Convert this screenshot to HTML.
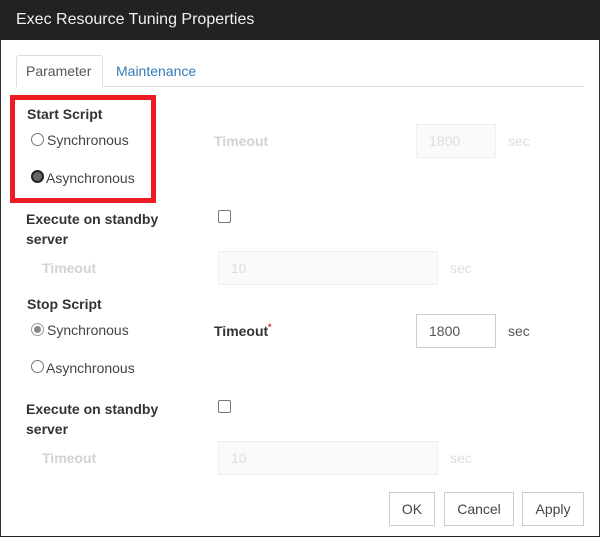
<!DOCTYPE html>
<html><head><meta charset="utf-8">
<style>
html,body{margin:0;padding:0;background:#fff}
#p{position:relative;width:600px;height:537px;overflow:hidden;background:#fff;font-family:"Liberation Sans",sans-serif;font-size:14px;color:#333}
#p div{position:absolute;white-space:nowrap;box-sizing:border-box}
.t{line-height:20px}
.b{font-weight:bold}
.d{color:#d2d2d2}
.s{color:#555}
.i{border:1px solid #ccc;height:34px;line-height:32px;padding-left:12px;color:#555}
.id{border:1px solid #eee;background:#fafafa;color:#ddd}
.btn{border:1px solid #ccc;height:34px;line-height:32px;text-align:center;color:#444;top:492px}
.r{width:13px;height:13px;border-radius:50%;border:1px solid #767676;background:#fff}
.c{width:13px;height:13px;border-radius:2px;border:1px solid #767676;background:#fff}
</style></head><body>
<div id="p">
<div style="left:0;top:0;width:600px;height:40px;background:#222"></div>
<div class="t" style="left:16px;top:9px;font-size:16px;line-height:22px;color:#f0f0f0">Exec Resource Tuning Properties</div>
<div style="left:0;top:40px;width:1px;height:497px;background:#333"></div>
<div style="left:599px;top:40px;width:1px;height:497px;background:#333"></div>
<div style="left:0;top:536px;width:600px;height:1px;background:#222"></div>

<div style="left:16px;top:86px;width:568px;height:1px;background:#ddd"></div>
<div style="left:16px;top:55px;width:87px;height:32px;border:1px solid #ddd;border-bottom:0;border-radius:3px 3px 0 0;background:#fff"></div>
<div class="t" style="left:26px;top:61px;color:#555">Parameter</div>
<div class="t" style="left:116px;top:61px;color:#337ab7">Maintenance</div>

<div style="left:10px;top:95px;width:146px;height:108px;border:5px solid #ed1c24"></div>
<div class="t b" style="left:27px;top:104px">Start Script</div>
<div class="r" style="left:31px;top:133px"></div>
<div class="t s" style="left:47px;top:130px;color:#444">Synchronous</div>
<div class="r" style="left:31px;top:170px;background:#666;border:2px solid #222"></div>
<div class="t s" style="left:46px;top:168px;color:#444">Asynchronous</div>
<div class="t b d" style="left:214px;top:131px">Timeout</div>
<div class="i id" style="left:416px;top:124px;width:80px">1800</div>
<div class="t" style="left:508px;top:131px;color:#ddd">sec</div>

<div class="t b" style="left:26px;top:209px">Execute on standby</div>
<div class="t b" style="left:26px;top:229px">server</div>
<div class="c" style="left:218px;top:210px"></div>
<div class="t b d" style="left:42px;top:258px">Timeout</div>
<div class="i id" style="left:218px;top:251px;width:220px">10</div>
<div class="t" style="left:450px;top:258px;color:#ddd">sec</div>

<div class="t b" style="left:27px;top:294px">Stop Script</div>
<div class="r" style="left:31px;top:323px;border-color:#999;background:#fff"></div>
<div style="left:34px;top:326px;width:7px;height:7px;border-radius:50%;background:#888"></div>
<div class="t" style="left:47px;top:320px;color:#444">Synchronous</div>
<div class="r" style="left:31px;top:360px"></div>
<div class="t" style="left:46px;top:358px;color:#444">Asynchronous</div>
<div class="t b" style="left:214px;top:321px">Timeout</div>
<div style="left:268px;top:322px;font-size:9px;line-height:10px;color:#c9302c;font-weight:bold">*</div>
<div class="i" style="left:416px;top:314px;width:80px">1800</div>
<div class="t s" style="left:508px;top:321px">sec</div>

<div class="t b" style="left:26px;top:399px">Execute on standby</div>
<div class="t b" style="left:26px;top:419px">server</div>
<div class="c" style="left:218px;top:400px"></div>
<div class="t b d" style="left:42px;top:448px">Timeout</div>
<div class="i id" style="left:218px;top:441px;width:220px">10</div>
<div class="t" style="left:450px;top:448px;color:#ddd">sec</div>

<div class="btn" style="left:389px;width:46px">OK</div>
<div class="btn" style="left:444px;width:70px">Cancel</div>
<div class="btn" style="left:522px;width:62px">Apply</div>
</div>
</body></html>
